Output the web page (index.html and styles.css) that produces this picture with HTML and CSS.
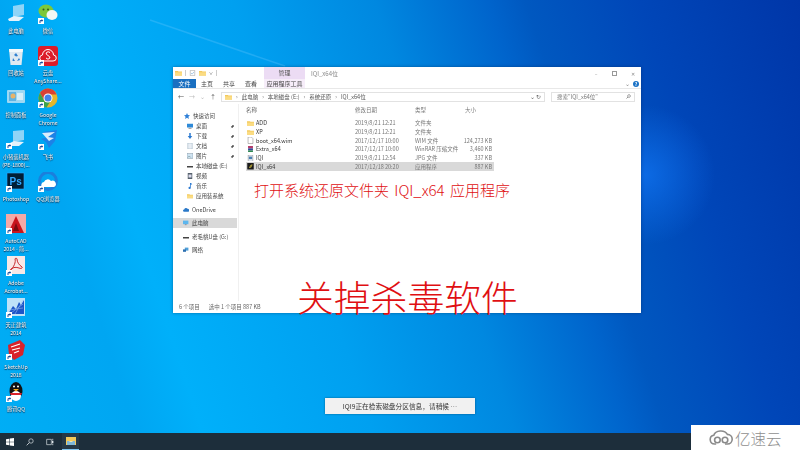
FILE: index.html
```html
<!DOCTYPE html>
<html lang="zh">
<head>
<meta charset="utf-8">
<title>Desktop</title>
<link rel="stylesheet" href="styles.css">
</head>
<body>
<svg class="defs" width="0" height="0">
  <symbol id="badge" viewBox="0 0 6 6"><rect width="6" height="6" fill="#fff"/><path d="M1.5 5V3.2Q1.5 2 3 2H3.6V1L5.2 2.5 3.6 4V3H3Q2.5 3 2.5 3.6V5Z" fill="#1a4f9c"/></symbol>
  <symbol id="folder" viewBox="0 0 10 8"><path d="M0 1h4l1 1h5v6H0z" fill="#f3c95b"/><rect y="3" width="10" height="5" fill="#fbdc83"/></symbol>
</svg>
<main class="desktop">
  <svg class="ray" viewBox="0 0 800 450"><path d="M150 20 285 66" stroke="#7fd0ff" stroke-opacity=".25" stroke-width="1.500" fill="none"/></svg>
  <section class="icons">
    <div class="ico"><svg viewBox="0 0 20 20"><path d="M7 2 18 0v11L7 13z" fill="#8fd4f7"/><path d="M2 15l6-3 10 1-5 4H3z" fill="#e4f2fb"/></svg><span>此电脑</span></div>
    <div class="ico"><svg viewBox="0 0 20 20"><path d="M3 3h14l-1.500 16H4.500z" fill="#dfeaf2"/><path d="M3 3h14l-.4 3H3.400z" fill="#f5f9fb"/><path d="M8 9l2-2 2 3-2 .5zM7 12l2 3H6.500zM13 12l1 2-3 1z" fill="#2f7fd0"/></svg><span>回收站</span></div>
    <div class="ico"><svg viewBox="0 0 20 20"><rect x="1" y="2" width="18" height="13" rx="1" fill="#9fd8f3"/><rect x="3" y="4" width="7" height="9" fill="#5fb3e3"/><circle cx="7" cy="8" r="2.500" fill="#e7b36a"/><rect x="11" y="5" width="6" height="7" fill="#d5eefa"/></svg><span>控制面板</span></div>
    <div class="ico"><svg viewBox="0 0 20 20"><path d="M7 1 18 0v10L7 12z" fill="#8fd4f7"/><path d="M2 14l6-3 10 1-5 4H3z" fill="#e4f2fb"/><use href="#badge" x="0" y="13" width="6" height="6"/></svg><span>小猪装机器<br>(PE-1800)...</span></div>
    <div class="ico"><svg viewBox="0 0 20 20"><rect x="1" y="1" width="17" height="16" fill="#001e36"/><rect x="1" y="1" width="17" height="16" fill="none" stroke="#31a8ff" stroke-width=".6"/><text x="3.500" y="13" class="ps">Ps</text><use href="#badge" x="0" y="14" width="6" height="6"/></svg><span>Photoshop</span></div>
    <div class="ico"><svg viewBox="0 0 20 20"><rect x="0" y="0" width="20" height="19" fill="#f4a9a6"/><path d="M10 2 18 19H2z" fill="#c8141c"/><path d="M10 9l3 8H7z" fill="#7a0c10"/><use href="#badge" x="0" y="14" width="6" height="6"/></svg><span>AutoCAD<br>2014 - 简...</span></div>
    <div class="ico"><svg viewBox="0 0 20 20"><rect x="1" y="0" width="18" height="18" fill="#f8e8e6"/><path d="M4 15C8 11 10 6 9 3c0-1 2-1 2 0 0 3 2 6 5 8 1 1-1 2-3 1-3-1-5-1-8 1-1 2-2 3-1 2z" fill="none" stroke="#c8272a" stroke-width="1"/><use href="#badge" x="0" y="14" width="6" height="6"/></svg><span>Adobe<br>Acrobat...</span></div>
    <div class="ico"><svg viewBox="0 0 20 20"><rect x="1" y="0" width="18" height="18" fill="#bfe2f8"/><path d="M2 16 7 8l3 3 3-7 2 3 3-5v14H2z" fill="#1c55c8"/><path d="M3 12l14-2M5 15l12-9M9 16l8-14" stroke="#a7c8f2" stroke-width=".5"/><use href="#badge" x="0" y="14" width="6" height="6"/></svg><span>天正建筑<br>2014</span></div>
    <div class="ico"><svg viewBox="0 0 20 20"><path d="M2 5 14 0l5 5-2 10-9 5-5-5z" fill="#d9222a"/><path d="M5 7l9-3M6 10l8-2M8 13l5-2" stroke="#fff" stroke-width="1.200"/><use href="#badge" x="0" y="14" width="6" height="6"/></svg><span>SketchUp<br>2018</span></div>
    <div class="ico"><svg viewBox="0 0 20 20"><ellipse cx="10" cy="9" rx="6.500" ry="9" fill="#111"/><ellipse cx="10" cy="14" rx="5" ry="5" fill="#fff"/><path d="M7 7h6l-3 2.500z" fill="#f5a81c"/><path d="M4 11h12l-1 2H5z" fill="#d9222a"/><circle cx="8" cy="4.500" r="1" fill="#fff"/><circle cx="12" cy="4.500" r="1" fill="#fff"/><use href="#badge" x="0" y="14" width="6" height="6"/></svg><span>腾讯QQ</span></div>
    <div class="ico"><svg viewBox="0 0 20 20"><ellipse cx="8" cy="7" rx="7.500" ry="6.500" fill="#7cc83a"/><ellipse cx="14" cy="11" rx="5.500" ry="5" fill="#f4f7f4"/><circle cx="5.500" cy="5.500" r="1" fill="#35591a"/><circle cx="10" cy="5.500" r="1" fill="#35591a"/><use href="#badge" x="0" y="14" width="6" height="6"/></svg><span>微信</span></div>
    <div class="ico"><svg viewBox="0 0 20 20"><rect x="0" y="0" width="20" height="20" rx="3" fill="#dc1c28"/><path d="M5 15a3 3 0 0 1-.5-6 5.500 5.500 0 0 1 11 0 3 3 0 0 1-.5 6z" fill="none" stroke="#fff"/><path d="M12 6.500Q10 5 8.500 6.500T10 9.500 11.500 12.500 8 12" fill="none" stroke="#fff"/><use href="#badge" x="0" y="14" width="6" height="6"/></svg><span>云盘<br>AnyShare...</span></div>
    <div class="ico"><svg viewBox="0 0 20 20"><circle cx="10" cy="10" r="9.500" fill="#e4b62c"/><path d="M10 .5A9.500 9.500 0 0 0 2 5l4 7 4-5.500h8.500A9.500 9.500 0 0 0 10 .5z" fill="#d94035"/><path d="M2 5a9.500 9.500 0 0 0 6.500 14.400L12 14H7z" fill="#3fa34d"/><circle cx="10" cy="10" r="4.500" fill="#fff"/><circle cx="10" cy="10" r="3.500" fill="#4682e8"/><use href="#badge" x="0" y="14" width="6" height="6"/></svg><span>Google<br>Chrome</span></div>
    <div class="ico"><svg viewBox="0 0 20 20"><path d="M5 2 19 0 17 11 11 18 8 12 3 9 10 7z" fill="#1d82e6"/><path d="M4 3l13-1-7 5 6 1-5 3z" fill="#d8ecfb"/><use href="#badge" x="0" y="14" width="6" height="6"/></svg><span>飞书</span></div>
    <div class="ico"><svg viewBox="0 0 20 20"><circle cx="10" cy="9" r="8.500" fill="none" stroke="#1b7fdc" stroke-width="3"/><path d="M4 15a3 3 0 0 1 2-5 4 4 0 0 1 7-1 3 3 0 0 1 3 6z" fill="#fff"/><use href="#badge" x="0" y="14" width="6" height="6"/></svg><span>QQ浏览器</span></div>
  </section>

  <article class="window">
    <header class="titlebar soft">
      <div class="quick">
        <svg class="q" viewBox="0 0 10 8"><use href="#folder"/></svg>
        <i class="sep"></i>
        <svg class="q" viewBox="0 0 8 8"><path d="M1 .5h6v7H1z" fill="#fff" stroke="#9a9a9a" stroke-width=".7"/><path d="M2 4l1.500 1.500L6 2.500" fill="none" stroke="#5f9bd1" stroke-width=".7"/></svg>
        <svg class="q" viewBox="0 0 10 8"><use href="#folder"/></svg>
        <b class="drop">∨</b>
        <i class="sep"></i>
      </div>
      <div class="manage">管理</div>
      <div class="wintitle">IQI_x64位</div>
      <div class="controls"><span>–</span><span class="box"></span><span>✕</span></div>
    </header>
    <nav class="ribbon soft">
      <div class="tab file">文件</div>
      <div class="tab">主页</div>
      <div class="tab">共享</div>
      <div class="tab">查看</div>
      <div class="tab tools">应用程序工具</div>
      <div class="help"><span>⌄</span><b>?</b></div>
    </nav>
    <div class="addr-row soft">
      <div class="arrows"><span>←</span><span class="off">→</span><span class="off">⌄</span><span>↑</span></div>
      <div class="addr">
        <svg class="q" viewBox="0 0 10 8"><use href="#folder"/></svg>
        <span>›</span><span>此电脑</span><span>›</span><span>本地磁盘 (E:)</span><span>›</span><span>系统还原</span><span>›</span><span>IQI_x64位</span>
        <em>⌄ ↻</em>
      </div>
      <div class="search"><span>搜索"IQI_x64位"</span>
        <svg viewBox="0 0 8 8"><circle cx="4.800" cy="3.200" r="2.200" fill="none" stroke="#555" stroke-width=".8"/><path d="M3.200 4.800.8 7.200" stroke="#555"/></svg>
      </div>
    </div>
    <div class="body">
      <aside class="side soft">
        <div class="nav head"><svg viewBox="0 0 8 8"><path d="M4 0l1.200 2.700L8 3 5.900 4.900 6.500 8 4 6.400 1.500 8l.6-3.100L0 3l2.800-.3z" fill="#2f80d8"/></svg>快速访问</div>
        <div class="nav sub"><svg viewBox="0 0 8 8"><rect y="1" width="8" height="5" fill="#2f8ad8"/><rect x="2" y="6.500" width="4" height="1" fill="#777"/></svg>桌面<i>📌</i></div>
        <div class="nav sub"><svg viewBox="0 0 8 8"><path d="M3 0h2v4h2L4 8 1 4h2z" fill="#2a78d0"/></svg>下载<i>📌</i></div>
        <div class="nav sub"><svg viewBox="0 0 8 8"><path d="M1 0h6v8H1z" fill="#e8eef4" stroke="#8aa0b4" stroke-width=".6"/></svg>文档<i>📌</i></div>
        <div class="nav sub"><svg viewBox="0 0 8 8"><rect y="1" width="8" height="6" fill="#cfe3f1" stroke="#6f8598" stroke-width=".6"/><path d="M1 6l2-2 2 2" stroke="#466" fill="none" stroke-width=".6"/></svg>图片<i>📌</i></div>
        <div class="nav sub"><svg viewBox="0 0 8 8"><rect y="4" width="8" height="2" fill="#444"/></svg>本地磁盘 (E:)</div>
        <div class="nav sub"><svg viewBox="0 0 8 8"><rect x="1" y="0" width="6" height="8" fill="#55606c"/><rect x="2" y="2" width="4" height="4" fill="#dde"/></svg>视频</div>
        <div class="nav sub"><svg viewBox="0 0 8 8"><path d="M4 0h1.500l1.500 2H5v4.500A1.500 1.500 0 1 1 4 5z" fill="#2a78d0"/></svg>音乐</div>
        <div class="nav sub"><svg viewBox="0 0 10 8"><use href="#folder"/></svg>应用装系统</div>
        <div class="nav gap"><svg viewBox="0 0 10 8"><path d="M2 7a2 2 0 0 1 0-4 3 3 0 0 1 5.500-1A2.500 2.500 0 0 1 8 7z" fill="#2a78c8"/></svg>OneDrive</div>
        <div class="nav gap sel"><svg viewBox="0 0 10 8"><rect width="9" height="6" fill="#5cb6ee"/><rect x="3" y="6.500" width="3" height="1" fill="#667"/></svg>此电脑</div>
        <div class="nav gap"><svg viewBox="0 0 8 8"><rect y="4" width="8" height="2" fill="#444"/></svg>老毛桃U盘 (G:)</div>
        <div class="nav gap"><svg viewBox="0 0 10 8"><rect x="3" y="0" width="6" height="5" fill="#4f9fd8"/><rect y="3" width="5" height="4" fill="#2c6fb0"/></svg>网络</div>
      </aside>
      <section class="files soft">
        <div class="row hdr"><span class="c-name up">名称</span><span class="c-date">修改日期</span><span class="c-type">类型</span><span class="c-size left">大小</span></div>
        <div class="row"><span class="c-name"><svg viewBox="0 0 10 8"><use href="#folder"/></svg>ADD</span><span class="c-date">2019/8/21 12:21</span><span class="c-type">文件夹</span><span class="c-size"></span></div>
        <div class="row"><span class="c-name"><svg viewBox="0 0 10 8"><use href="#folder"/></svg>XP</span><span class="c-date">2019/8/21 12:21</span><span class="c-type">文件夹</span><span class="c-size"></span></div>
        <div class="row"><span class="c-name"><svg viewBox="0 0 8 8"><path d="M1 0h4l2 2v6H1z" fill="#fff" stroke="#777" stroke-width=".6"/></svg>boot_x64.wim</span><span class="c-date">2017/12/17 10:00</span><span class="c-type">WIM 文件</span><span class="c-size">124,273 KB</span></div>
        <div class="row"><span class="c-name"><svg viewBox="0 0 8 8"><rect x="1" width="6" height="3" fill="#b23a6a"/><rect x="1" y="3" width="6" height="2.500" fill="#2d4a9a"/><rect x="1" y="5.500" width="6" height="2.500" fill="#2f8a50"/></svg>Extra_x64</span><span class="c-date">2017/12/17 10:00</span><span class="c-type">WinRAR 压缩文件</span><span class="c-size">3,460 KB</span></div>
        <div class="row"><span class="c-name"><svg viewBox="0 0 8 8"><rect x="1" width="6" height="8" fill="#dfe6ee" stroke="#777" stroke-width=".5"/><rect x="2" y="2" width="4" height="3" fill="#4a7fb0"/></svg>IQI</span><span class="c-date">2019/8/21 12:54</span><span class="c-type">JPG 文件</span><span class="c-size">337 KB</span></div>
        <div class="row picked"><span class="c-name"><svg viewBox="0 0 8 8"><rect width="8" height="8" fill="#1b1b1b"/><path d="M2.500 6 5 2M4 6l2-4" stroke="#d6c23a"/></svg>IQI_x64</span><span class="c-date">2017/12/18 20:20</span><span class="c-type">应用程序</span><span class="c-size">887 KB</span></div>
      </section>
    </div>
    <footer class="status soft"><span>6 个项目</span><span>选中 1 个项目 887 KB</span></footer>
    <p class="note">打开系统还原文件夹 IQI_x64 应用程序</p>
    <p class="warn">关掉杀毒软件</p>
  </article>

  <div class="toast">IQI9正在检索磁盘分区信息，请稍候 …</div>

  <div class="brand">
    <svg viewBox="0 0 30 20"><path d="M9 17.500H7a5.500 5.500 0 0 1-1-10.900A9 7 0 0 1 23 5.500a6 6 0 0 1 0 12h-3" fill="none" stroke="#8a8a8a" stroke-width="2"/><circle cx="10.500" cy="12.500" r="3.500" fill="none" stroke="#8a8a8a" stroke-width="2"/><circle cx="20" cy="12.500" r="3.500" fill="none" stroke="#8a8a8a" stroke-width="2"/></svg>
    <span>亿速云</span>
  </div>

  <footer class="taskbar">
    <svg class="tb" viewBox="0 0 12 12"><path d="M0 1.800 5 1v4.600H0zM5.800.9 12 0v5.600H5.800zM0 6.400h5V11l-5-.8zM5.800 6.400H12V12l-6.200-.9z" fill="#fff"/></svg>
    <svg class="tb" viewBox="0 0 12 12"><circle cx="7.500" cy="4.500" r="3.300" fill="none" stroke="#dfe6ea" stroke-width="1"/><path d="M5 7 1 11" stroke="#dfe6ea" stroke-width="1.200"/></svg>
    <svg class="tb" viewBox="0 0 12 12"><path d="M1 2h7v8H1zM9 2h2M9 10h2M9 6h2" fill="none" stroke="#dfe6ea"/><rect x="9" y="4" width="2" height="4" fill="#dfe6ea"/></svg>
    <div class="tb-app"><svg viewBox="0 0 10 8"><path d="M0 0h10v8H0z" fill="#f3c95b"/><rect x="1" y="4" width="8" height="4" fill="#7fb8d8"/><rect x="3.500" y="4" width="3" height="1" fill="#f8e6a8"/></svg></div>
  </footer>
</main>
</body>
</html>
```
FILE: styles.css
```css
* { box-sizing: border-box; }
html, body { margin: 0; padding: 0; width: 800px; height: 450px; overflow: hidden; }
body { font-family: "Noto Sans CJK SC", "Liberation Sans", sans-serif; }
.defs { position: absolute; }
svg { display: block; flex: none; }

.desktop {
  position: relative;
  width: 800px;
  height: 450px;
  overflow: hidden;
  background:
    radial-gradient(circle 70px at 645px 175px, rgba(20,125,255,.6), rgba(20,125,255,0)),
    linear-gradient(72deg, #00aef5 0%, #00a6f2 15%, #00b0fa 22%, #00a0f0 40%, #0088e0 55%, #0064cc 67%, #0058c0 71%, #0046b8 83%, #0036a8 100%);
}
.ray { position: absolute; left: 0; top: 0; width: 800px; height: 450px; }

/* desktop icons */
.icons {
  position: absolute;
  left: 0;
  top: 4px;
  display: grid;
  grid-template-columns: 32px 32px;
  grid-template-rows: repeat(10, 42px);
  grid-auto-flow: column;
}
.ico { display: flex; flex-direction: column; align-items: center; }
.ico svg { width: 20px; height: 20px; filter: blur(.3px); }
.ico span {
  margin-top: 3px;
  font-size: 5.200px;
  line-height: 7.500px;
  text-align: center;
  white-space: nowrap;
  color: #fff;
  text-shadow: 0 0 1px #046, 0 1px 1px #124;
  filter: blur(.35px);
}
.ps { font: 700 10px "Liberation Sans", sans-serif; fill: #31a8ff; }

/* window */
.window {
  position: absolute;
  left: 173px;
  top: 67px;
  width: 468px;
  height: 246px;
  display: flex;
  flex-direction: column;
  background: #fff;
  box-shadow: 0 0 3px rgba(0,30,70,.45);
  color: #444;
  font-size: 6px;
}
.soft { filter: blur(.3px); }
.titlebar { height: 12px; display: flex; align-items: center; flex: none; }
.quick { width: 91px; padding-left: 2px; display: flex; align-items: center; gap: 3px; }
.q { width: 7px; height: 6px; }
.sep { width: 1px; height: 6px; background: #ccc; }
.drop { font-weight: 400; font-size: 4px; color: #333; }
.manage {
  width: 41px;
  height: 12px;
  background: #ecdcf4;
  text-align: center;
  line-height: 12px;
  color: #555;
}
.wintitle { flex: 1; padding-left: 6px; color: #888; }
.controls { display: flex; width: 50px; justify-content: space-between; align-items: center; padding-right: 3px; color: #888; }
.controls span { width: 10px; text-align: center; font-size: 5px; }
.controls .box { flex: none; width: 5px; height: 5px; border: 1px solid #999; }

.ribbon {
  height: 10px;
  flex: none;
  display: flex;
  align-items: stretch;
  border-bottom: 1px solid #e8e8e8;
}
.tab { width: 22px; text-align: center; line-height: 9px; color: #444; }
.file { width: 23px; background: #1a6fc0; color: #fff; }
.tools { width: 41px; background: #f6edf9; margin-left: 2px; }
.help { margin-left: auto; display: flex; align-items: center; gap: 3px; padding-right: 2px; color: #888; }
.help b { width: 6px; height: 6px; border-radius: 50%; background: #1a72c6; color: #fff; font-size: 5px; line-height: 6px; text-align: center; }

.addr-row { height: 15px; flex: none; display: flex; align-items: center; gap: 2px; padding: 0 6px 0 5px; }
.arrows { width: 41px; display: flex; justify-content: space-between; padding-right: 3px; font-size: 6px; color: #555; }
.arrows .off { color: #bbb; }
.addr {
  flex: 1;
  height: 10px;
  display: flex;
  align-items: center;
  gap: 4px;
  padding: 0 3px;
  border: 1px solid #e2e2e2;
  color: #555;
  font-size: 5.500px;
}
.addr em { margin-left: auto; font-style: normal; color: #666; }
.search {
  width: 84px;
  height: 10px;
  margin-left: 4px;
  display: flex;
  align-items: center;
  justify-content: space-between;
  padding: 0 3px 0 5px;
  border: 1px solid #e2e2e2;
  color: #777;
  font-size: 5.500px;
}
.search svg { width: 5px; height: 5px; }

.body { flex: 1; display: flex; min-height: 0; }
.side { width: 66px; flex: none; padding-top: 7px; border-right: 1px solid #f0f0f0; }
.nav {
  height: 10px;
  display: flex;
  align-items: center;
  gap: 3px;
  padding-left: 11px;
  color: #444;
  font-size: 5.500px;
  white-space: nowrap;
}
.nav svg { width: 6px; height: 6px; }
.nav i { margin-left: auto; margin-right: 4px; font-size: 3.500px; font-style: normal; filter: grayscale(1); }
.sub { padding-left: 14px; }
.gap { margin-top: 3.500px; padding-left: 10px; }
.sel { background: #d9d9d9; margin-right: 1px; }
.files { flex: 1; padding: 0 0 0 7px; }
.row {
  width: 248px;
  height: 8.700px;
  display: flex;
  align-items: center;
  color: #555;
  font-size: 5.500px;
  white-space: nowrap;
}
.hdr { height: 11px; margin-bottom: 3.800px; color: #666; }
.c-name { width: 109px; display: flex; align-items: center; gap: 2px; padding-left: 1px; color: #333; }
.c-name svg { width: 7px; height: 6.500px; }
.c-date { width: 60px; color: #777; }
.c-type { width: 46px; color: #777; }
.c-size { width: 31px; text-align: right; color: #777; }
.left { text-align: left; padding-left: 4px; }
.up { padding-left: 0; color: #666; }
.picked { background: #d9d9d9; }
.status { height: 12px; flex: none; display: flex; gap: 9px; align-items: center; padding-left: 6px; color: #666; font-size: 5.500px; }

.note, .warn { position: absolute; margin: 0; color: #e00f12; white-space: nowrap; font-weight: 300; }
.note { left: 81px; top: 113px; font-size: 15px; line-height: 20px; word-spacing: 2px; }
.warn { left: 124px; top: 205px; font-size: 36.800px; line-height: 48px; }

/* toast */
.toast {
  position: absolute;
  left: 325px;
  top: 398px;
  width: 150px;
  height: 16px;
  background: #f1f1f1;
  box-shadow: 0 0 2px rgba(0,0,0,.4);
  text-align: center;
  line-height: 16px;
  font-size: 6.700px;
  color: #333;
  filter: blur(.25px);
}

/* taskbar */
.taskbar {
  position: absolute;
  left: 0;
  bottom: 0;
  width: 800px;
  height: 17px;
  display: flex;
  align-items: center;
  background: #1d2e3b;
  padding-left: 6px;
}
.tb { width: 8px; height: 8px; margin-right: 12px; filter: blur(.3px); }
.tb-app {
  width: 17px;
  height: 17px;
  margin-left: -4px;
  display: flex;
  align-items: center;
  justify-content: center;
  border-bottom: 1px solid #7fc4ee;
  background: #263947;
}
.tb-app svg { width: 10px; height: 8px; filter: blur(.3px); }

/* watermark */
.brand {
  position: absolute;
  right: 0;
  bottom: 0;
  z-index: 2;
  width: 109px;
  height: 25px;
  display: flex;
  align-items: center;
  gap: 2px;
  padding-left: 18px;
  background: #fff;
  color: #8f8f8f;
  font-size: 15.500px;
  font-weight: 300;
}
.brand svg { width: 24px; height: 16px; }
```
